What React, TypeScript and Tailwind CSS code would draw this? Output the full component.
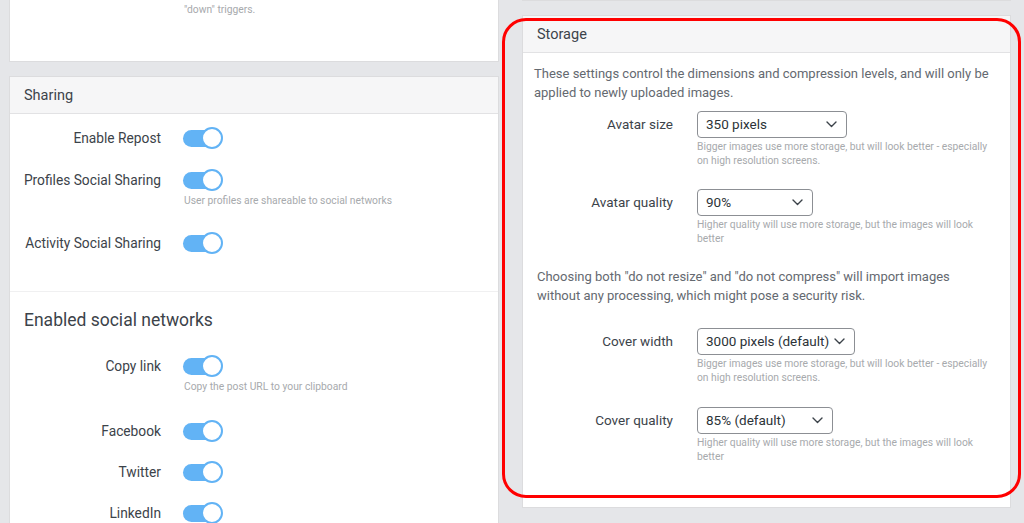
import React from 'react';

const font = { fontFamily: 'Roboto, "Noto Sans", sans-serif' };

function Toggle() {
  return (
    <div className="relative w-[40px] h-[22px] shrink-0">
      <div className="absolute left-0 top-[3px] h-[17px] w-[36px] rounded-full bg-[#62b3f5]" />
      <div className="absolute right-0 top-0 h-[22px] w-[22px] rounded-full border-2 border-[#62b3f5] bg-white" />
    </div>
  );
}

function ToggleRow({ label, desc, className = '' }: { label: string; desc?: string; className?: string }) {
  return (
    <div className={className}>
      <div className="flex items-center">
        <div className="w-[151px] text-right text-[13.75px] text-[#3c434a]">{label}</div>
        <div className="ml-[22px]">
          <Toggle />
        </div>
      </div>
      {desc && <div className="ml-[174px] mt-[3px] text-[10.3px] leading-[13px] text-[#a7aaad]">{desc}</div>}
    </div>
  );
}

function Chevron() {
  return (
    <svg width="11" height="7" viewBox="0 0 11 7" fill="none" className="shrink-0">
      <path d="M1 1l4.5 4.5L10 1" stroke="#3c434a" strokeWidth="1.4" strokeLinecap="round" strokeLinejoin="round" />
    </svg>
  );
}

function SelectRow({
  label,
  value,
  width,
  desc,
  className = '',
}: {
  label: string;
  value: string;
  width: string;
  desc: string;
  className?: string;
}) {
  return (
    <div className={className}>
      <div className="flex items-center">
        <div className="w-[150px] text-right text-[13.5px] text-[#3c434a]">{label}</div>
        <div
          className={`ml-[24px] h-[27px] ${width} flex items-center justify-between rounded-[4px] border border-[#8c8f94] bg-white pl-[8px] pr-[9px] text-[13.5px] text-[#2c3338]`}
        >
          <span className="whitespace-nowrap">{value}</span>
          <Chevron />
        </div>
      </div>
      <div className="ml-[174px] mt-[2px] w-[296px] text-[10.3px] leading-[13.5px] text-[#a7aaad]">{desc}</div>
    </div>
  );
}

export default function App() {
  return (
    <div className="relative h-[523px] w-[1024px] overflow-hidden bg-[#e5e6e9] px-[9px]" style={font}>
      <div className="flex gap-[23px]">
        {/* left column */}
        <div className="flex w-[490px] flex-col">
          <div className="-mt-[40px] h-[102px] border border-[#dcdcde] bg-white pl-[174px] pt-[42px] text-[10.3px] leading-[13px] text-[#a7aaad]">
            <div>"down" triggers.</div>
          </div>

          <div className="mt-[14px] h-[460px] border border-[#dcdcde] bg-white">
            <div className="flex h-[37px] items-center border-b border-[#e2e2e4] bg-[#f6f6f7] pl-[14px] pt-[2px] text-[14.5px] text-[#3c434a]">
              Sharing
            </div>
            <div className="pt-[13px]">
              <ToggleRow label="Enable Repost" />
              <ToggleRow
                className="mt-[20px]"
                label="Profiles Social Sharing"
                desc="User profiles are shareable to social networks"
              />
              <ToggleRow className="mt-[25px]" label="Activity Social Sharing" />
            </div>
            <div className="mt-[37px] border-t border-[#f0f0f1] pt-[16px]">
              <div className="pl-[14px] text-[17.5px] leading-[24px] text-[#3c434a]">Enabled social networks</div>
              <ToggleRow
                className="mt-[23px]"
                label="Copy link"
                desc="Copy the post URL to your clipboard"
              />
              <ToggleRow className="mt-[27px]" label="Facebook" />
              <ToggleRow className="mt-[19px]" label="Twitter" />
              <ToggleRow className="mt-[19px]" label="LinkedIn" />
            </div>
          </div>
        </div>

        {/* right column */}
        <div className="flex w-[489px] flex-col">
          <div className="-mt-[20px] h-[21px] border border-[#dcdcde] bg-white" />
          <div className="mt-[14px] h-[493px] border border-[#dcdcde] bg-white">
            <div className="flex h-[37px] items-center border-b border-[#e2e2e4] bg-[#f6f6f7] pl-[14px] pt-[2px] text-[14.5px] text-[#3c434a]">
              Storage
            </div>
            <div className="pt-[11px]">
              <p className="pl-[11px] pr-[14px] text-[13px] leading-[19px] text-[#646970]">
                These settings control the dimensions and compression levels, and will only be applied to newly
                uploaded images.
              </p>
              <SelectRow
                className="mt-[9px]"
                label="Avatar size"
                value="350 pixels"
                width="w-[150px]"
                desc="Bigger images use more storage, but will look better - especially on high resolution screens."
              />
              <SelectRow
                className="mt-[22px]"
                label="Avatar quality"
                value="90%"
                width="w-[116px]"
                desc="Higher quality will use more storage, but the images will look better"
              />
              <p className="mt-[22px] pl-[14px] pr-[40px] text-[13px] leading-[19px] text-[#646970]">
                Choosing both "do not resize" and "do not compress" will import images without any processing, which
                might pose a security risk.
              </p>
              <SelectRow
                className="mt-[23px]"
                label="Cover width"
                value="3000 pixels (default)"
                width="w-[158px]"
                desc="Bigger images use more storage, but will look better - especially on high resolution screens."
              />
              <SelectRow
                className="mt-[23px]"
                label="Cover quality"
                value="85% (default)"
                width="w-[136px]"
                desc="Higher quality will use more storage, but the images will look better"
              />
            </div>
          </div>
        </div>
      </div>

      {/* annotation highlight */}
      <div className="pointer-events-none absolute left-[502px] top-[18px] h-[480px] w-[519px] rounded-[24px] border-[3px] border-[#ff0000]" />
    </div>
  );
}
